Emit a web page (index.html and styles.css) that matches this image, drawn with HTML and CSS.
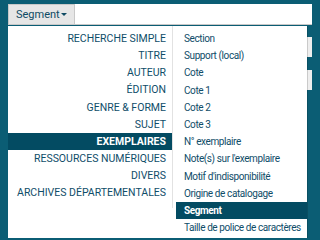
FILE: index.html
```html
<!DOCTYPE html>
<html>
<head>
<meta charset="utf-8">
<link rel="stylesheet" href="styles.css">
</head>
<body>
<div class="bar">
  <div class="btn">Segment <span class="caret"></span></div>
  <div class="input"></div>
</div>
<div class="bgrows">
  <div class="bgrow r1"></div>
  <div class="bgrow r2"></div>
</div>
<div class="menu">
  <ul class="cats">
    <li>RECHERCHE SIMPLE</li>
    <li>TITRE</li>
    <li>AUTEUR</li>
    <li>ÉDITION</li>
    <li>GENRE &amp; FORME</li>
    <li>SUJET</li>
    <li class="active">EXEMPLAIRES</li>
    <li>RESSOURCES NUMÉRIQUES</li>
    <li>DIVERS</li>
    <li>ARCHIVES DÉPARTEMENTALES</li>
  </ul>
  <ul class="fields">
    <li>Section</li>
    <li>Support (local)</li>
    <li>Cote</li>
    <li>Cote 1</li>
    <li>Cote 2</li>
    <li>Cote 3</li>
    <li>N° exemplaire</li>
    <li>Note(s) sur l'exemplaire</li>
    <li>Motif d'indisponibilité</li>
    <li>Origine de catalogage</li>
    <li class="active">Segment</li>
    <li>Taille de police de caractères</li>
  </ul>
</div>
</body>
</html>
```
FILE: styles.css
```css
html, body {
  margin: 0;
  padding: 0;
}
body {
  background: #0b5d74;
  font-family: Roboto, "Liberation Sans", sans-serif;
  width: 312px;
  height: 238px;
  overflow: hidden;
  position: relative;
}
.bar {
  display: flex;
  padding: 4px 0 0 8px;
  height: 21px;
}
.btn {
  box-sizing: border-box;
  width: 67px;
  height: 21px;
  background: #e6e6e6;
  border: 1px solid #c8c8c8;
  color: #0e4a63;
  font-size: 11px;
  line-height: 19px;
  padding-left: 7px;
}
.caret {
  display: inline-block;
  width: 0;
  height: 0;
  border-left: 3px solid transparent;
  border-right: 3px solid transparent;
  border-top: 3px solid #0e4a63;
  vertical-align: middle;
  margin-left: -1px;
  margin-top: -2px;
}
.input {
  flex: 1;
  height: 20px;
  background: #fff;
  border-bottom: 1px solid #c8c8c8;
}
.bgrows {
  display: flex;
  flex-direction: column;
  padding: 12px 0 0 290px;
}
.bgrow {
  height: 20px;
  background: #eeeeee;
}
.r2 {
  margin-top: 13px;
}
.menu {
  position: absolute;
  left: 8px;
  top: 26px;
  width: 299px;
  height: 220px;
  background: #fff;
  display: flex;
  box-shadow: 1px 0 0 rgba(0,0,0,0.15);
}
.menu ul {
  list-style: none;
  margin: 0;
  padding: 4px 0 0 0;
}
.cats {
  width: 164px;
  border-right: 1px solid #e2e2e2;
  align-self: flex-start;
  padding-bottom: 6px !important;
  font-size: 10.5px;
  text-align: right;
}
.cats li {
  line-height: 17.15px;
  padding-right: 6px;
  color: #0f4d69;
}
.cats li.active {
  background: #034b62;
  color: #fff;
  font-weight: bold;
}
.fields {
  flex: 1;
  padding-left: 3px !important;
  font-size: 10px;
  letter-spacing: -0.4px;
}
.fields li {
  line-height: 17.2px;
  padding-left: 8px;
  color: #0f4d69;
  white-space: nowrap;
}
.fields li.active {
  background: #034b62;
  color: #fff;
  font-weight: bold;
}
```
